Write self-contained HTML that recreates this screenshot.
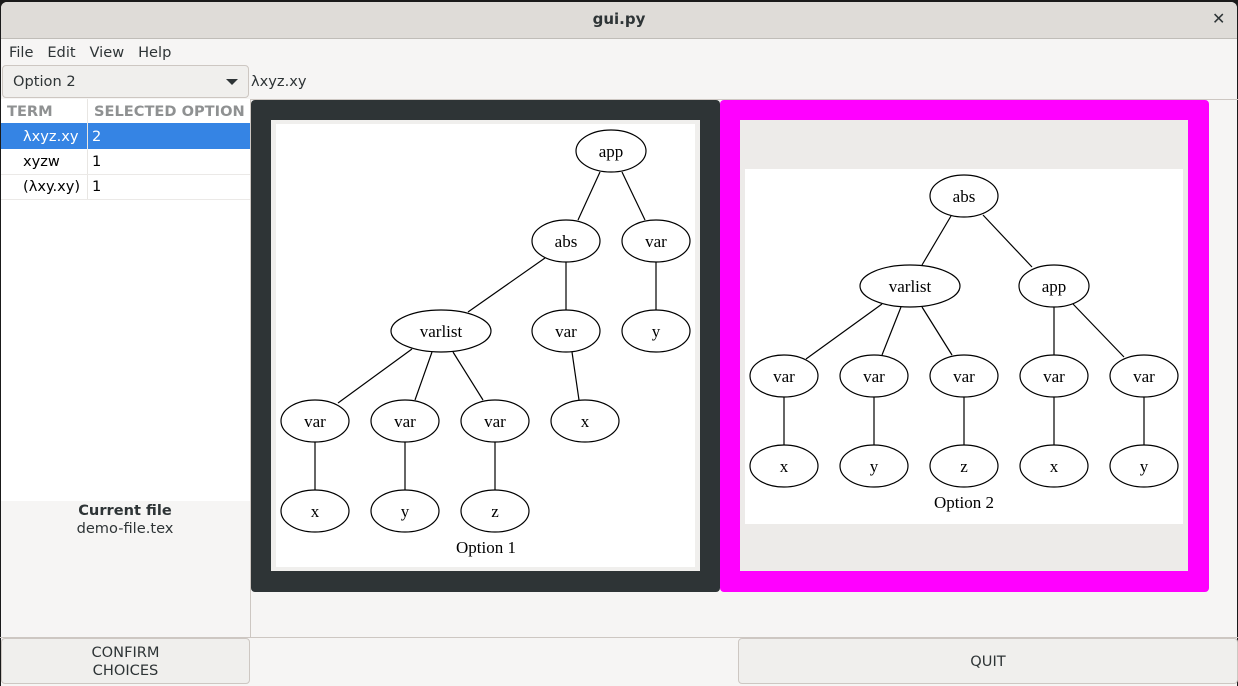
<!DOCTYPE html>
<html><head><meta charset="utf-8"><style>
*{margin:0;padding:0;box-sizing:border-box}
body{width:1238px;height:686px;overflow:hidden;background:#1a1a1a;font-family:"DejaVu Sans","Liberation Sans",sans-serif;font-size:14.6px;color:#2e3436;position:relative}
.a{position:absolute}
</style></head><body>
<div class="a" style="left:1px;top:2px;width:1236px;height:684px;background:#f6f5f4;border-radius:6px 6px 0 0"></div>
<div class="a" style="left:1px;top:2px;width:1236px;height:37px;background:#dfdcd8;border-radius:6px 6px 0 0;border-bottom:1px solid #c0bdb8"></div>
<div class="a" style="left:0;top:10px;width:1238px;text-align:center;font-weight:bold;font-size:15px">gui.py</div>
<div class="a" style="left:1212px;top:9px;font-size:16px;font-weight:bold">✕</div>
<div class="a" style="left:9px;top:44px;word-spacing:0">File&nbsp;&nbsp;&nbsp;Edit&nbsp;&nbsp;&nbsp;View&nbsp;&nbsp;&nbsp;Help</div>
<div class="a" style="left:2px;top:65px;width:247px;height:33px;border:1px solid #cdc7c2;border-radius:4px;background:#f0efed"></div>
<div class="a" style="left:13px;top:73px">Option 2</div>
<div class="a" style="left:226px;top:79px;border-left:6px solid transparent;border-right:6px solid transparent;border-top:6px solid #2e3436"></div>
<div class="a" style="left:251px;top:73px">λxyz.xy</div>
<div class="a" style="left:250px;top:99px;width:988px;height:1px;background:#cdc7c2"></div>
<div class="a" style="left:1px;top:99px;width:249px;height:402px;background:#fff"></div>
<div class="a" style="left:250px;top:99px;width:1px;height:538px;background:#cdc7c2"></div>
<div class="a" style="left:1px;top:123px;width:249px;height:26px;background:#3584e4"></div>
<div class="a" style="left:87px;top:99px;width:1px;height:101px;background:#e8e6e3"></div>
<div class="a" style="left:1px;top:174px;width:249px;height:1px;background:#ebe9e7"></div>
<div class="a" style="left:1px;top:199px;width:249px;height:1px;background:#ebe9e7"></div>
<div class="a" style="left:7px;top:103px;font-weight:bold;color:#8f9192">TERM</div>
<div class="a" style="left:94px;top:103px;font-weight:bold;color:#8f9192">SELECTED OPTION</div>
<div class="a" style="left:23px;top:128px;color:#fff">λxyz.xy</div><div class="a" style="left:92px;top:128px;color:#fff">2</div>
<div class="a" style="left:23px;top:153px;color:#000">xyzw</div><div class="a" style="left:92px;top:153px;color:#000">1</div>
<div class="a" style="left:23px;top:178px;color:#000">(λxy.xy)</div><div class="a" style="left:92px;top:178px;color:#000">1</div>
<div class="a" style="left:0;top:502px;width:250px;text-align:center;font-weight:bold">Current file</div>
<div class="a" style="left:0;top:520px;width:250px;text-align:center">demo-file.tex</div>
<div class="a" style="left:251px;top:100px;width:469px;height:492px;background:#2e3436;border-radius:4px"></div>
<div class="a" style="left:271px;top:120px;width:429px;height:451px;background:#f0efed"></div>
<div class="a" style="left:276px;top:124px;width:419px;height:443px;background:#fff"></div>
<div class="a" style="left:720px;top:100px;width:489px;height:492px;background:#f0f;border-radius:4px"></div>
<div class="a" style="left:740px;top:120px;width:448px;height:451px;background:#edebe9"></div>
<div class="a" style="left:745px;top:169px;width:438px;height:355px;background:#fff"></div>
<div class="a" style="left:0;top:637px;width:1238px;height:1px;background:#cdc7c2"></div>
<div class="a" style="left:1px;top:638px;width:249px;height:46px;border:1px solid #cdc7c2;border-radius:4px;background:#f0efed;text-align:center;padding-top:5px;line-height:18px">CONFIRM<br>CHOICES</div>
<div class="a" style="left:738px;top:638px;width:500px;height:46px;border:1px solid #cdc7c2;border-radius:4px;background:#f0efed;text-align:center;padding-top:14px">QUIT</div>
<svg class="a" style="left:0;top:0" width="1238" height="686" font-family="Liberation Serif,serif" font-size="17" text-anchor="middle" stroke-width="1.2">
<g stroke="#000">
<line x1="600" y1="172" x2="578" y2="220"/><line x1="622" y1="172" x2="645" y2="220"/>
<line x1="545" y1="258" x2="468" y2="312"/><line x1="566" y1="262" x2="566" y2="310"/><line x1="656" y1="262" x2="656" y2="310"/>
<line x1="412" y1="349" x2="338" y2="403"/><line x1="432" y1="352" x2="415" y2="400"/><line x1="453" y1="352" x2="483" y2="400"/>
<line x1="572" y1="352" x2="579" y2="400"/>
<line x1="315" y1="442" x2="315" y2="490"/><line x1="405" y1="442" x2="405" y2="490"/><line x1="495" y1="442" x2="495" y2="490"/>
<line x1="951" y1="216" x2="922" y2="265"/><line x1="983" y1="215" x2="1032" y2="267"/>
<line x1="882" y1="304" x2="806" y2="359"/><line x1="901" y1="307" x2="882" y2="355"/><line x1="922" y1="307" x2="952" y2="355"/>
<line x1="1054" y1="307" x2="1054" y2="355"/><line x1="1073" y1="304" x2="1124" y2="357"/>
<line x1="784" y1="397" x2="784" y2="445"/><line x1="874" y1="397" x2="874" y2="445"/><line x1="964" y1="397" x2="964" y2="445"/><line x1="1054" y1="397" x2="1054" y2="445"/><line x1="1144" y1="397" x2="1144" y2="445"/>
</g>
<g fill="#fff" stroke="#000">
<ellipse cx="611" cy="151" rx="35" ry="21"/><ellipse cx="566" cy="241" rx="34" ry="21"/><ellipse cx="656" cy="241" rx="34" ry="21"/>
<ellipse cx="441" cy="331" rx="50" ry="21"/><ellipse cx="566" cy="331" rx="34" ry="21"/><ellipse cx="656" cy="331" rx="34" ry="21"/>
<ellipse cx="315" cy="421" rx="34" ry="21"/><ellipse cx="405" cy="421" rx="34" ry="21"/><ellipse cx="495" cy="421" rx="34" ry="21"/><ellipse cx="585" cy="421" rx="34" ry="21"/>
<ellipse cx="315" cy="511" rx="34" ry="21"/><ellipse cx="405" cy="511" rx="34" ry="21"/><ellipse cx="495" cy="511" rx="34" ry="21"/>
<ellipse cx="964" cy="196" rx="34" ry="21"/><ellipse cx="910" cy="286" rx="50" ry="21"/><ellipse cx="1054" cy="286" rx="35" ry="21"/>
<ellipse cx="784" cy="376" rx="34" ry="21"/><ellipse cx="874" cy="376" rx="34" ry="21"/><ellipse cx="964" cy="376" rx="34" ry="21"/><ellipse cx="1054" cy="376" rx="34" ry="21"/><ellipse cx="1144" cy="376" rx="34" ry="21"/>
<ellipse cx="784" cy="466" rx="34" ry="21"/><ellipse cx="874" cy="466" rx="34" ry="21"/><ellipse cx="964" cy="466" rx="34" ry="21"/><ellipse cx="1054" cy="466" rx="34" ry="21"/><ellipse cx="1144" cy="466" rx="34" ry="21"/>
</g>
<g fill="#000">
<text x="611" y="157">app</text><text x="566" y="247">abs</text><text x="656" y="247">var</text>
<text x="441" y="337">varlist</text><text x="566" y="337">var</text><text x="656" y="337">y</text>
<text x="315" y="427">var</text><text x="405" y="427">var</text><text x="495" y="427">var</text><text x="585" y="427">x</text>
<text x="315" y="517">x</text><text x="405" y="517">y</text><text x="495" y="517">z</text>
<text x="486" y="553">Option 1</text>
<text x="964" y="202">abs</text><text x="910" y="292">varlist</text><text x="1054" y="292">app</text>
<text x="784" y="382">var</text><text x="874" y="382">var</text><text x="964" y="382">var</text><text x="1054" y="382">var</text><text x="1144" y="382">var</text>
<text x="784" y="472">x</text><text x="874" y="472">y</text><text x="964" y="472">z</text><text x="1054" y="472">x</text><text x="1144" y="472">y</text>
<text x="964" y="508">Option 2</text>
</g>
</svg>
</body></html>
